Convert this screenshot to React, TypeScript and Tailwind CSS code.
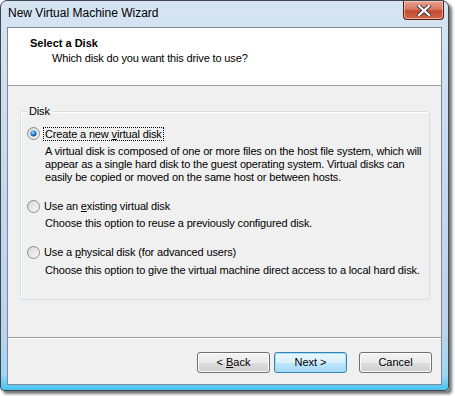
import React from "react";

function Radio({ checked }: { checked?: boolean }) {
  return (
    <svg width="13" height="13" viewBox="0 0 13 13" className="shrink-0">
      <defs>
        <linearGradient id={checked ? "rg1" : "rg0"} x1="0" y1="0" x2="1" y2="1">
          <stop offset="0" stopColor="#d2d2d2" />
          <stop offset="1" stopColor="#ffffff" />
        </linearGradient>
        <radialGradient id="dot" cx="0.4" cy="0.35" r="0.7">
          <stop offset="0" stopColor="#bfe8ff" />
          <stop offset="0.45" stopColor="#2f8fe0" />
          <stop offset="1" stopColor="#0c3f8a" />
        </radialGradient>
      </defs>
      <circle cx="6.5" cy="6.5" r="6" fill={`url(#${checked ? "rg1" : "rg0"})`} stroke="#8a8c8e" strokeWidth="1" />
      <circle cx="6.5" cy="6.5" r="4.3" fill="none" stroke="#e6e6e6" strokeWidth="0.8" />
      {checked && <circle cx="6.5" cy="6.5" r="3" fill="url(#dot)" />}
    </svg>
  );
}

function Btn({ children, primary }: { children: React.ReactNode; primary?: boolean }) {
  return (
    <div
      className={
        "w-[73px] h-[21px] rounded-[3px] border flex items-center justify-center text-[11px] text-black " +
        (primary
          ? "border-[#3c7fb1] bg-[linear-gradient(#eaf6fd_0%,#d9f0fc_50%,#bee6fd_51%,#a7d9f5_100%)] shadow-[inset_0_0_0_1px_#9ee2f9]"
          : "border-[#707070] bg-[linear-gradient(#f2f2f2_0%,#ebebeb_50%,#dddddd_51%,#cfcfcf_100%)] shadow-[inset_0_0_0_1px_#fcfcfc]")
      }
    >
      <span className="whitespace-pre">{children}</span>
    </div>
  );
}

export default function App() {
  return (
    <div className="w-[455px] h-[396px] bg-white" style={{ fontFamily: "'Liberation Sans', Arial, sans-serif" }}>
      <div className="w-[449px] h-[391px] rounded-t-[7px] rounded-b-[4px] border border-[#3d4650] shadow-[3px_3px_3px_rgba(0,0,0,0.55)] bg-[linear-gradient(180deg,#d6e4f2_0%,#c7daee_40%,#bcd3ea_85%,#9fd6f2_96%,#48c4ef_100%)] flex flex-col">
        <div className="h-[26px] flex items-start justify-between shrink-0">
          <div className="pl-[7px] pt-[5px] text-[12px] leading-[15px] text-black">
            New Virtual Machine Wizard
          </div>
          <div className="mr-[4px] w-[41px] h-[19px] rounded-b-[4px] border border-t-0 border-[#5b1a12] bg-[linear-gradient(#e8a390_0%,#d67a62_45%,#c24a2f_55%,#cf6a4a_100%)] shadow-[inset_0_0_0_1px_rgba(255,220,210,0.6)] flex items-center justify-center">
            <svg width="14" height="11" viewBox="0 0 14 11">
              <path d="M2 1 L12 10 M12 1 L2 10" stroke="#3a3a3a" strokeWidth="4" strokeLinecap="square" />
              <path d="M2 1 L12 10 M12 1 L2 10" stroke="#ffffff" strokeWidth="2.2" strokeLinecap="square" />
            </svg>
          </div>
        </div>
        <div className="mx-[6px] h-[358px] border border-[#7a8aa0] bg-[#f0f0f0] flex flex-col">
          <div className="h-[58px] bg-white border-b border-[#a0a0a0] shrink-0">
            <div className="pl-[22px] pt-[9px] text-[11px] leading-[13px] font-bold text-black">Select a Disk</div>
            <div className="pl-[44px] pt-[2px] text-[11px] leading-[13px] tracking-[-0.15px] text-black">Which disk do you want this drive to use?</div>
          </div>
          <div className="flex-1 px-[12px] pt-[25px] text-[11px] leading-[13px] tracking-[-0.15px] whitespace-nowrap text-black">
            <div className="relative h-[189px] mr-[-1px] rounded-[3px] border border-[#d5dfe5] shadow-[inset_1px_1px_0_#ffffff] pl-[6px] pt-[15px]">
              <span className="absolute left-[6px] top-[-7px] bg-[#f0f0f0] px-[2px] leading-[13px]">Disk</span>
              <div className="flex items-center gap-[3px] h-[13px]">
                <Radio checked />
                <span className="border border-dotted border-black px-[1px] leading-[12px]">
                  Create a new <u>v</u>irtual disk
                </span>
              </div>
              <div className="pl-[18px] pt-[5px]">
                A virtual disk is composed of one or more files on the host file system, which will
                <br />
                appear as a single hard disk to the guest operating system. Virtual disks can
                <br />
                easily be copied or moved on the same host or between hosts.
              </div>
              <div className="flex items-center gap-[4px] h-[13px] mt-[16px]">
                <Radio />
                <span>
                  Use an <u>e</u>xisting virtual disk
                </span>
              </div>
              <div className="pl-[18px] pt-[4px]">Choose this option to reuse a previously configured disk.</div>
              <div className="flex items-center gap-[4px] h-[13px] mt-[16px]">
                <Radio />
                <span>
                  Use a <u>p</u>hysical disk (for advanced users)
                </span>
              </div>
              <div className="pl-[18px] pt-[5px]">Choose this option to give the virtual machine direct access to a local hard disk.</div>
            </div>
          </div>
          <div className="h-[47px] border-t border-[#a0a0a0] shadow-[inset_0_1px_0_#ffffff] flex items-start justify-end pr-[9px] pt-[14px] shrink-0">
            <div className="flex gap-[4px]">
              <Btn>
                {"< "}
                <u>B</u>ack
              </Btn>
              <Btn primary>Next &gt;</Btn>
            </div>
            <div className="ml-[12px]">
              <Btn>Cancel</Btn>
            </div>
          </div>
        </div>
      </div>
    </div>
  );
}
